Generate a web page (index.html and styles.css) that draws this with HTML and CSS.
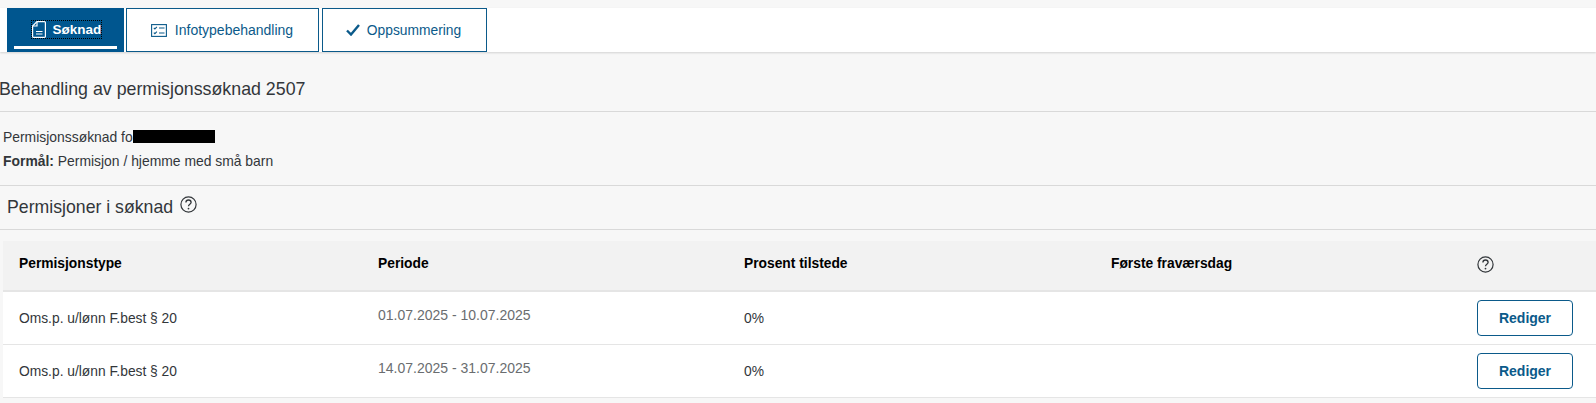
FILE: index.html
```html
<!DOCTYPE html>
<html>
	<head>
		<meta name="viewport" content="width=device-width, initial-scale=1.0">
		<meta charset="UTF-8">
		<title>Behandling av permisjonssøknad 2507</title>
		<link rel="stylesheet" href="styles.css">
	</head>
	<body>
		<nav class="tabs">
			<a class="tab tab-active">
				<span class="tab-inner">
					<span class="tab-focus">
						<svg class="tab-icon" width="14" height="17" viewBox="0 0 14 17" fill="none" stroke="#fff" stroke-width="1.2">
							<path d="M5 .6h7.4a1 1 0 0 1 1 1v13.8a1 1 0 0 1-1 1H1.6a1 1 0 0 1-1-1V5z"/>
							<path d="M5 .6V5H.6"/>
							<path d="M4 10.5h6.5M4 13h6.5"/>
						</svg>
						Søknad
					</span>
				</span>
			</a>
			<a class="tab tab-info">
				<svg class="tab-icon" width="16" height="13" viewBox="0 0 16 13" fill="none" stroke="#0b5a8a" stroke-width="1.1">
					<rect x="0.6" y="0.6" width="14.8" height="11.8"/>
					<path d="M2.8 3.8l1.1 1.1 2-2M2.8 8.6l1.1 1.1 2-2M8 4h5.5M8 9h5.5"/>
				</svg>
				Infotypebehandling
			</a>
			<a class="tab tab-summary">
				<svg class="tab-icon" width="14" height="12" viewBox="0 0 14 12" fill="none" stroke="#0b5a8a" stroke-width="2.4">
					<path d="M1 6.5l4 4L13 1"/>
				</svg>
				Oppsummering
			</a>
		</nav>

		<h1 class="page-title">Behandling av permisjonssøknad 2507</h1>

		<section class="intro">
			<p>Permisjonssøknad for<span class="redacted"></span></p>
			<p><b>Formål:</b> Permisjon / hjemme med små barn</p>
		</section>

		<h2 class="section-title">
			Permisjoner i søknad
			<svg class="help" width="17" height="17" viewBox="0 0 17 17"><use href="#help-icon"/></svg>
		</h2>

		<div class="table">
			<div class="row row-head">
				<div>Permisjonstype</div>
				<div>Periode</div>
				<div>Prosent tilstede</div>
				<div>Første fraværsdag</div>
				<div>
					<svg class="help" width="17" height="17" viewBox="0 0 17 17"><use href="#help-icon"/></svg>
				</div>
			</div>
			<div class="row">
				<div>Oms.p. u/lønn F.best § 20</div>
				<div class="period">01.07.2025 - 10.07.2025</div>
				<div>0%</div>
				<div></div>
				<div><button class="btn">Rediger</button></div>
			</div>
			<div class="row">
				<div>Oms.p. u/lønn F.best § 20</div>
				<div class="period">14.07.2025 - 31.07.2025</div>
				<div>0%</div>
				<div></div>
				<div><button class="btn">Rediger</button></div>
			</div>
		</div>

		<svg width="0" height="0" class="defs">
			<symbol id="help-icon" viewBox="0 0 17 17">
				<circle cx="8.5" cy="8.5" r="7.6" fill="none" stroke="#32363a" stroke-width="1.2"/>
				<path d="M5.9 6.6a2.6 2.6 0 0 1 5.2 0c0 1.6-2.6 1.9-2.6 3.6" fill="none" stroke="#32363a" stroke-width="1.3"/>
				<circle cx="8.5" cy="12.6" r="0.9" fill="#32363a"/>
			</symbol>
		</svg>
	</body>
</html>
```

FILE: styles.css
```css
html, body {
	margin: 0;
	padding: 0;
}

body {
	background-color: #f7f7f7;
	color: #32363a;
	font-family: "Liberation Sans", Arial, sans-serif;
	font-size: 13.8px;
	height: 403px;
	overflow: hidden;
}

.defs {
	display: block;
	height: 0;
}

.tabs {
	display: flex;
	margin-top: 8px;
	height: 44px;
	padding-left: 7px;
	background-color: #fff;
	box-shadow: 0 1px 2px rgba(0, 0, 0, 0.15);
}

.tab {
	display: flex;
	align-items: center;
	justify-content: center;
	gap: 9px;
	box-sizing: border-box;
	border: 1px solid #0b5a8a;
	background-color: #fff;
	color: #0b5a8a;
	font-size: 13.8px;
}

.tab-active {
	width: 117px;
	background-color: #00568f;
	color: #fff;
	font-weight: bold;
	border-color: #00568f;
}

.tab-inner {
	display: flex;
	align-items: center;
	justify-content: center;
	width: 103px;
	height: 31px;
	box-sizing: border-box;
	border-bottom: 3px solid #fff;
	margin-top: 6px;
	padding-bottom: 4px;
}

.tab-focus {
	display: flex;
	align-items: center;
	gap: 7px;
	margin-left: 2px;
	outline: 1px dotted #000;
	font-size: 13.5px;
}

.tab-info {
	width: 193px;
	margin-left: 2px;
	font-size: 14px;
	gap: 8px;
	padding-right: 1px;
}

.tab-summary {
	width: 165px;
	margin-left: 3px;
	gap: 7px;
	padding-right: 2px;
}

.page-title {
	margin: 0 0 0 -1px;
	height: 59px;
	line-height: 74px;
	border-bottom: 1px solid #d9d9d9;
	font-size: 17.8px;
	font-weight: normal;
}

.intro {
	height: 74px;
	padding: 17px 0 0 3px;
	box-sizing: border-box;
	border-bottom: 1px solid #d9d9d9;
	font-size: 13.9px;
}

.intro p {
	margin: 0 0 8px;
	line-height: 16px;
}

.redacted {
	display: inline-block;
	width: 82px;
	height: 13px;
	margin-left: -4px;
	background-color: #000;
	vertical-align: -1px;
}

.section-title {
	display: flex;
	align-items: flex-start;
	gap: 7px;
	margin: 0 0 11px;
	height: 44px;
	padding-left: 7px;
	box-sizing: border-box;
	border-bottom: 1px solid #d9d9d9;
	font-size: 17.7px;
	font-weight: normal;
	line-height: 43px;
}

.section-title .help {
	margin-top: 10px;
}

.table {
	margin-left: 3px;
}

.row {
	display: grid;
	grid-template-columns: 375px 366px 367px 366px 1fr;
	align-items: center;
	height: 53px;
	box-sizing: border-box;
	background-color: #fff;
	border-bottom: 1px solid #e5e5e5;
}

.row > div:first-child {
	padding-left: 16px;
}

.row-head {
	height: 51px;
	padding-bottom: 4px;
	background-color: #f2f2f2;
	border-bottom: 2px solid #e5e5e5;
	color: #000;
	font-weight: bold;
}

.row-head .help {
	display: block;
	margin-top: 2px;
}

.period {
	color: #6a6d70;
	font-size: 14px;
	margin-top: -6px;
}

.btn {
	display: block;
	width: 96px;
	height: 36px;
	box-sizing: border-box;
	border: 1px solid #0b5a8a;
	border-radius: 4px;
	background-color: #fff;
	color: #0b5a8a;
	font-family: inherit;
	font-size: 14px;
	font-weight: bold;
	padding: 0;
}
```
